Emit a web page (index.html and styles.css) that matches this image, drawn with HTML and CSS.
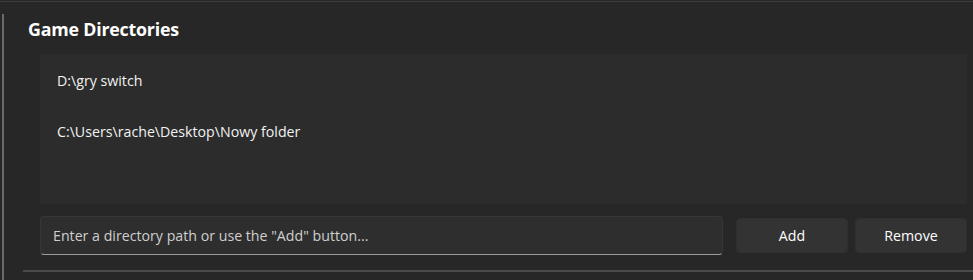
FILE: index.html
```html
<!DOCTYPE html>
<html lang="en">
<head>
    <meta charset="UTF-8">
    <title>Game Directories</title>
    <link rel="stylesheet" href="styles.css">
</head>
<body>
<div class="top-rule"></div>
<div class="panel">
    <div class="section">
        <h2 class="section-title">Game Directories</h2>
        <ul class="dir-list">
            <li>D:\gry switch</li>
            <li>C:\Users\rache\Desktop\Nowy folder</li>
        </ul>
        <div class="dir-controls">
            <input class="dir-input" type="text" placeholder="Enter a directory path or use the &quot;Add&quot; button...">
            <button class="btn">Add</button>
            <button class="btn">Remove</button>
        </div>
    </div>
    <div class="bottom-rule"></div>
</div>
</body>
</html>
```

FILE: styles.css
```css
body {
    margin: 0;
    background: #272727;
    font-family: "Segoe UI", "Open Sans", sans-serif;
    color: #ffffff;
    height: 280px;
    overflow: hidden;
}

.top-rule {
    height: 1px;
    margin-top: 1px;
    background: #3d3d3d;
}

.panel {
    margin-top: 12px;
    margin-left: 2px;
    border-left: 2px solid #6b6b6b;
    height: 280px;
}

.section {
    padding-top: 4px;
    padding-left: 36px;
    padding-right: 6px;
}

.section-title {
    margin: 0 0 0 -12px;
    font-size: 17.8px;
    font-weight: 700;
    line-height: 22px;
    letter-spacing: -0.2px;
}

.dir-list {
    list-style: none;
    margin: 14px 0 0 0;
    padding: 17px 17px 0 17px;
    height: 133px;
    background: #2c2c2c;
    font-size: 14.2px;
}

.dir-list li {
    line-height: 20px;
    margin-bottom: 31px;
    color: #f2f2f2;
}

.dir-controls {
    display: flex;
    align-items: center;
    gap: 13px;
    margin-top: 12px;
}

.dir-input {
    flex: 1;
    height: 39px;
    box-sizing: border-box;
    background: #2e2e2e;
    border: 1px solid #363636;
    border-bottom-color: #9a9a9a;
    border-radius: 4px;
    padding: 0 12px;
    font-family: inherit;
    font-size: 14.2px;
    color: #ffffff;
    outline: none;
}

.dir-input::placeholder {
    color: #cfcfcf;
}

.btn {
    width: 112px;
    height: 35px;
    background: #333333;
    border: 1px solid #2f2f2f;
    border-radius: 4px;
    font-family: inherit;
    font-size: 14.2px;
    color: #ffffff;
}

.btn + .btn {
    margin-left: -6px;
}

.bottom-rule {
    height: 2px;
    margin-left: 19px;
    margin-top: 15px;
    background: #4a4a4a;
}
```
